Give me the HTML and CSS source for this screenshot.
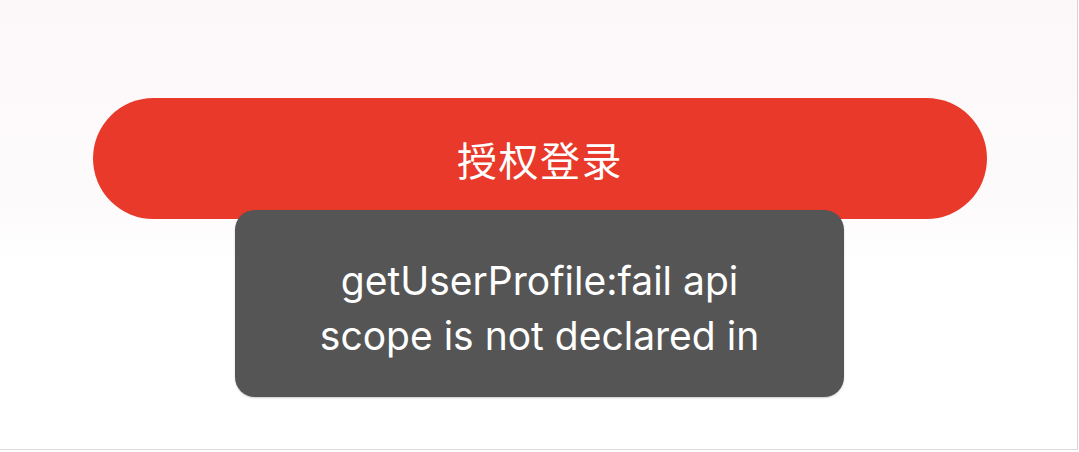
FILE: index.html
```html
<!DOCTYPE html>
<html>
<head>
	<title>授权登录</title>
	<link rel="stylesheet" href="styles.css">
</head>
<body>
	<div class="screen">
		<button class="login-btn">授权登录</button>
		<div class="toast">
			<p>getUserProfile:fail api<br>scope is not declared in</p>
		</div>
	</div>
</body>
</html>
```

FILE: styles.css
```css
html, body {
	margin: 0;
	padding: 0;
	background: #ffffff;
}

.screen {
	position: relative;
	width: 1078px;
	height: 450px;
	border-right: 1px solid #d6d6d6;
	border-bottom: 1px solid #dcdcdc;
	background: linear-gradient(to bottom, #fcf8f9 0px, #fdfafb 200px, #ffffff 260px);
	padding-top: 98px;
	box-sizing: border-box;
	overflow: hidden;
}

.login-btn {
	display: block;
	width: 894px;
	height: 121px;
	margin: 0 0 0 93px;
	border: none;
	border-radius: 61px;
	background-color: #e8392a;
	color: #ffffff;
	font-family: "Noto Sans CJK SC", "Noto Sans", sans-serif;
	font-size: 40px;
	letter-spacing: 1.5px;
	cursor: pointer;
}

.toast {
	position: absolute;
	left: 235px;
	top: 210px;
	width: 609px;
	height: 187px;
	border-radius: 20px;
	background-color: #555555;
	box-shadow: 0 1px 2px rgba(0, 0, 0, 0.2);
	display: flex;
	align-items: center;
	justify-content: center;
}

.toast p {
	margin: 8px 0 0 0;
	color: #ffffff;
	font-family: Inter, "Noto Sans", sans-serif;
	font-size: 39px;
	line-height: 55px;
	text-align: center;
}
```
